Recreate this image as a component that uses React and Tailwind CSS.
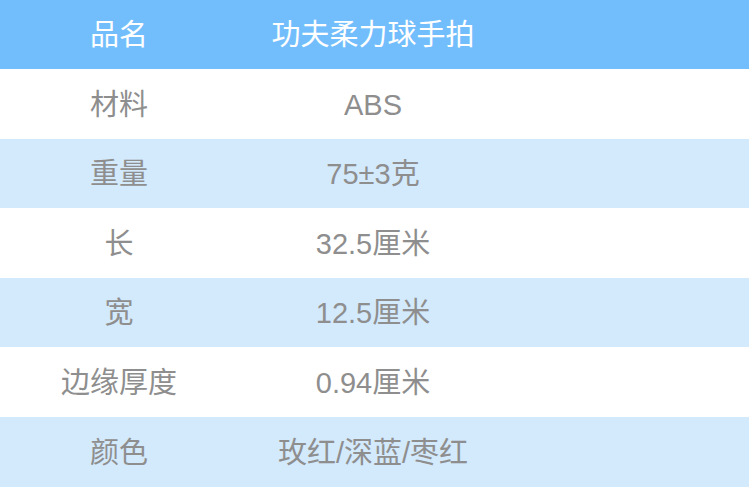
export default function App() {
  const rows = [
    ["材料", "ABS"],
    ["重量", "75±3克"],
    ["长", "32.5厘米"],
    ["宽", "12.5厘米"],
    ["边缘厚度", "0.94厘米"],
    ["颜色", "玫红/深蓝/枣红"],
  ];
  return (
    <div
      className="w-[749px] h-[487px] overflow-hidden bg-white"
      style={{ fontFamily: '"Liberation Sans", "Noto Sans CJK SC", sans-serif' }}
    >
      <div className="grid grid-cols-[238px_270px_1fr] h-[69px] pt-[2px] bg-[#72befd] text-white text-[29px] items-center">
        <div className="text-center">品名</div>
        <div className="text-center">功夫柔力球手拍</div>
        <div />
      </div>
      {rows.map((r, i) => (
        <div
          key={i}
          className={
            i % 2 === 0
              ? "grid grid-cols-[238px_270px_1fr] h-[69.6px] pt-[3px] bg-white text-[#8e8e8e] text-[29px] items-center"
              : "grid grid-cols-[238px_270px_1fr] h-[69.6px] pt-[3px] bg-[#d3e9fc] text-[#8e8e8e] text-[29px] items-center"
          }
        >
          <div className="text-center">{r[0]}</div>
          <div className="text-center">{r[1]}</div>
          <div />
        </div>
      ))}
    </div>
  );
}
